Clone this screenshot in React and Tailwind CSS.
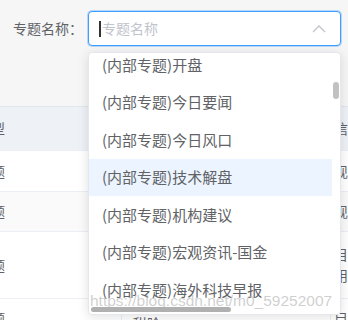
import React from 'react';

const items = [
  '(内部专题)开盘',
  '(内部专题)今日要闻',
  '(内部专题)今日风口',
  '(内部专题)技术解盘',
  '(内部专题)机构建议',
  '(内部专题)宏观资讯-国金',
  '(内部专题)海外科技早报',
];

// 表格行（被下拉框遮住的部分）
const rows = [
  { h: 'h-[44px]', bg: 'bg-[#eef1f6]', a: '型', b: '', c: '信' },
  { h: 'h-[41px]', bg: 'bg-white', a: '题', b: '', c: '现' },
  { h: 'h-[40px]', bg: 'bg-[#fafafa]', a: '题', b: '', c: '现' },
  { h: 'h-[67px]', bg: 'bg-white', a: '题', b: '', c: '目\n用' },
  { h: 'h-[40px]', bg: 'bg-white', a: '题', b: '甜脸', c: '目' },
];

const App = () => {
  return (
    <div
      className="relative w-[348px] h-[320px] overflow-hidden bg-white text-[#606266]"
      style={{ fontFamily: '"Noto Sans CJK SC", "Noto Sans", sans-serif' }}
    >
      {/* 查询条件 */}
      <div className="h-[106px] bg-[#f6f6f6] pt-[11px]">
        <div className="flex items-center">
          <span className="w-[88px] pl-[13px] text-[14px] leading-[35px] text-[#606266]">专题名称：</span>
          <div className="relative flex items-center w-[253px] h-[35px] bg-white border border-[#409eff] rounded-[4px] shadow-[0_0_0_1px_rgba(64,158,255,0.35)]">
            <span className="ml-[10px] w-[2px] h-[16px] bg-[#333]" />
            <span className="ml-[1px] text-[14px] text-[#c0c4cc]">专题名称</span>
            <svg className="absolute right-[14px] top-[12px]" width="14" height="9" viewBox="0 0 14 9" fill="none">
              <polyline points="1,8 7,2 13,8" stroke="#c0c4cc" strokeWidth="1.3" />
            </svg>
          </div>
        </div>
      </div>

      {/* 表格 */}
      <div className="border-t border-[#dfe6ec]">
        {rows.map((r, i) => (
          <div key={i} className={`flex ${r.h} ${r.bg} border-b border-[#ebeef5] text-[14px]`}>
            <div className="w-[125px] flex items-center overflow-hidden">
              <span className="-ml-[9px]">{r.a}</span>
            </div>
            <div className="w-[216px] border-l border-[#ebeef5] flex items-start pl-[11px] pt-[14px]">
              {r.b}
            </div>
            <div className="flex-1 border-l border-[#ebeef5] flex items-center pl-[3px] whitespace-pre leading-[21px]">
              {r.c}
            </div>
          </div>
        ))}
      </div>

      {/* 下拉框 */}
      <div className="absolute left-[88px] top-[52px] w-[253px] h-[263px] bg-white border border-[#e4e7ed] rounded-[4px] shadow-[0_2px_12px_rgba(0,0,0,0.12)] overflow-hidden">
        <ul className="-mt-[7px]">
          {items.map((t, i) => (
            <li
              key={t}
              className={`w-[243px] h-[37.5px] flex items-center pl-[13px] text-[15px] text-[#606266] ${i === 3 ? 'bg-[#ecf5ff]' : ''}`}
            >
              {t}
            </li>
          ))}
        </ul>
        <div className="absolute left-[244px] top-[29px] w-[6px] h-[17px] rounded-full bg-[#c1c1c1]" />
        <div className="absolute left-[2px] top-[254px] w-[140px] h-[5px] rounded-full bg-[#b0b0b0]" />
      </div>

      {/* 水印 */}
      <div
        className="absolute left-[90px] top-[292px] text-[15.5px] leading-[18px] text-[rgba(175,175,175,0.6)] whitespace-nowrap"
        style={{ fontFamily: '"Liberation Sans", Arial, sans-serif' }}
      >
        https://blog.csdn.net/m0_59252007
      </div>
    </div>
  );
};

export default App;
